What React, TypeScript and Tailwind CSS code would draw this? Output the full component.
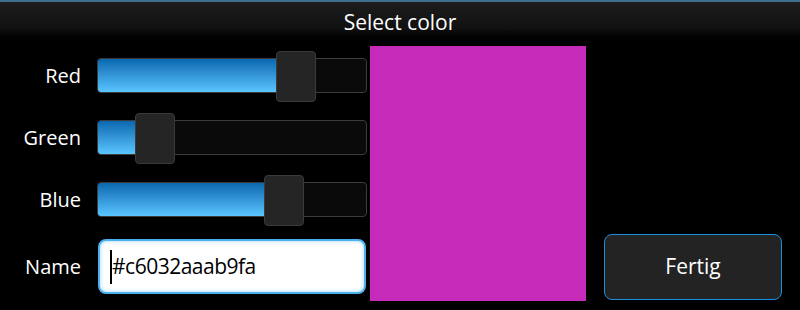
import React from "react";

const font = { fontFamily: '"Open Sans", "DejaVu Sans", sans-serif' };

type SliderProps = { label: string; value: number };

// track 270px wide, handle 40px, so handle travels 230px
function ColorSlider({ label, value }: SliderProps) {
    const pos = Math.round((value / 255) * 230);
    return (
        <div className="flex items-center h-[51px]">
            <div className="w-[81px] text-right text-white text-[20px] leading-none">{label}</div>
            <div className="relative ml-[16px] w-[270px] h-[35px] rounded-[4px] border border-[#3c3c3c] bg-[#0a0a0a]">
                <div
                    className="h-full rounded-l-[3px] bg-gradient-to-b from-[#0868b0] to-[#5ac6ff]"
                    style={{ width: pos + 20 }}
                />
                <div
                    className="absolute top-[-8px] w-[40px] h-[51px] rounded-[4px] border border-[#3a3a3a] bg-[#252526]"
                    style={{ left: pos - 1 }}
                />
            </div>
        </div>
    );
}

export default function App() {
    return (
        <div className="w-[800px] h-[310px] bg-black flex flex-col overflow-hidden" style={font}>
            <div className="h-[46px] border-t-2 border-[#3f6f8f] bg-gradient-to-b from-[#1d1d1d] via-[#111] via-60% to-black flex justify-center">
                <div className="text-white text-[21px] pt-[5px]">Select color</div>
            </div>
            <div className="flex flex-1">
                <div className="w-[367px] pt-[4px] flex flex-col gap-[11px]">
                    <ColorSlider label="Red" value={198} />
                    <ColorSlider label="Green" value={42} />
                    <ColorSlider label="Blue" value={185} />
                    <div className="flex items-center mt-[3px]">
                        <div className="w-[81px] text-right text-white text-[20px]">Name</div>
                        <div className="ml-[17px] w-[268px] h-[55px] rounded-[8px] border-2 border-[#4db0ee] bg-white shadow-[inset_0_0_4px_#9ad6ff] flex items-center pl-[10px]">
                            <span className="w-[2px] h-[34px] bg-black" />
                            <span className="text-black text-[21px] tracking-[-0.5px]">#c6032aaab9fa</span>
                        </div>
                    </div>
                </div>
                <div className="ml-[3px] w-[216px] h-[255px] bg-[#c62ab9]" />
                <div className="flex-1 flex items-end pl-[18px] pb-[10px]">
                    <button className="w-[178px] h-[66px] rounded-[8px] border border-[#1a8fdc] bg-[#232323] text-white text-[21px]">
                        Fertig
                    </button>
                </div>
            </div>
        </div>
    );
}
